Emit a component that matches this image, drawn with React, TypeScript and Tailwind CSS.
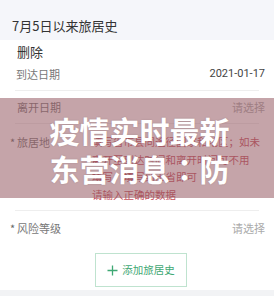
import React from 'react';

const font = { fontFamily: '"Noto Sans CJK SC", "Noto Sans", sans-serif' };

function Row({ label, value, required, valueClass }: { label: string; value: string; required?: boolean; valueClass?: string }) {
  return (
    <div className="flex h-[20px] items-center justify-between pr-[9px]">
      <div className="flex items-center">
        <span className="w-[7px] pl-[10px] box-content text-[11px] text-[#666]">{required ? '*' : ''}</span>
        <span className="text-[11px] text-[#777]">{label}</span>
      </div>
      <span className={valueClass ?? 'text-[11px] text-[#aaa]'}>{value}</span>
    </div>
  );
}

export default function App() {
  return (
    <div className="relative w-[274px] h-[296px] overflow-hidden bg-white" style={font}>
      <div className="h-[40px] bg-[#f5f6fa] pt-[16px] pl-[12px] text-[13px] leading-[20px] text-[#333]">
        7月5日以来旅居史
      </div>

      <div className="flex h-[24px] items-center pl-[17px] text-[13px] text-[#333]">删除</div>

      <div className="flex h-[20px] items-center justify-between pl-[16px] pr-[9px]">
        <span className="text-[11px] text-[#777]">到达日期</span>
        <span className="text-[11px] text-[#444]" style={{ fontFamily: 'Roboto, sans-serif' }}>2021-01-17</span>
      </div>
      <div className="mx-[15px] mt-[6px] h-px bg-[#eeeeee]" />

      <div className="mt-[6px]">
        <Row label="离开日期" value="请选择" />
      </div>
      <div className="mx-[15px] mt-[6px] h-px bg-[#eeeeee]" />

      <div className="mt-[8px] flex">
        <div className="flex h-[20px] w-[92px] items-center">
          <span className="w-[7px] pl-[10px] box-content text-[11px] text-[#666]">*</span>
          <span className="text-[11px] text-[#777]">旅居地</span>
        </div>
        <div className="text-[10.5px] leading-[17.5px] text-[#c4505c] mt-[1px]">
          <div>填写省市县同途径国家和地区；如未</div>
          <div>离开至到达时间和离开时间可不用</div>
          <div>填写，填写到市省即可</div>
          <div>请输入正确的数据</div>
        </div>
      </div>
      <div className="mx-[15px] mt-[7px] h-px bg-[#eeeeee]" />

      <div className="mt-[7px]">
        <Row label="风险等级" value="请选择" required />
      </div>

      <div className="mt-[15px] flex justify-center pl-[8px]">
        <button className="flex h-[34px] w-[92px] items-center justify-center gap-[4px] border border-[#bfe3cf] bg-white text-[#3fa874]">
          <svg width="11" height="11" viewBox="0 0 11 11" fill="none" stroke="#3fa874" strokeWidth="1.3">
            <path d="M5.5 0.5v10M0.5 5.5h10" />
          </svg>
          <span className="text-[10.5px]">添加旅居史</span>
        </button>
      </div>
      <div className="mt-[3px] h-[10px] bg-[#f2f3f5]" />

      <div className="absolute left-0 top-[98px] flex h-[100px] w-full items-center justify-center bg-[rgba(150,90,98,0.55)] pl-[5px] pt-[1px]">
        <div
          className="w-[184px] text-center text-[30px] font-bold leading-[38px] text-white break-all"
          style={{ fontFamily: '"Noto Sans CJK JP", "Noto Sans CJK SC", sans-serif', textShadow: '0 0 2px rgba(0,0,0,0.15)' }}
        >
          疫情实时最新东营消息：防
        </div>
      </div>
    </div>
  );
}
